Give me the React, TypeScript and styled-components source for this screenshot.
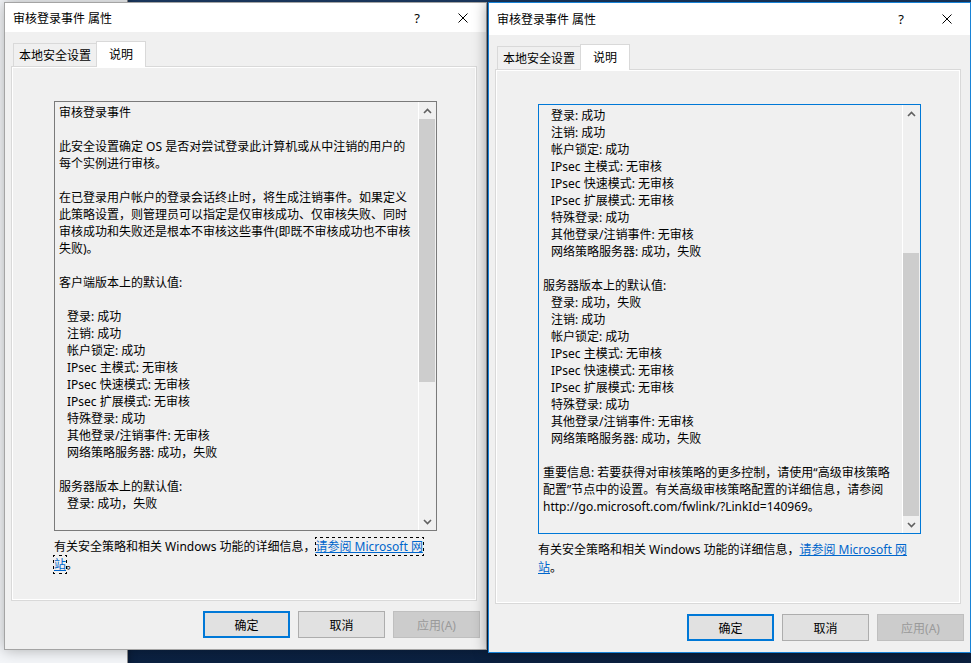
import React, { useLayoutEffect, useRef } from "react";
import styled, { createGlobalStyle, css } from "styled-components";

const GlobalStyle = createGlobalStyle`
  html, body { margin: 0; padding: 0; }
  body {
    font-family: "Noto Sans", "Noto Sans CJK SC", sans-serif;
    font-size: 12px;
    color: #000;
  }
`;

const LINE = 17;
const VISIBLE = 24;

const RAW = [
  "审核登录事件",
  "",
  "此安全设置确定 OS 是否对尝试登录此计算机或从中注销的用户的",
  "每个实例进行审核。",
  "",
  "在已登录用户帐户的登录会话终止时，将生成注销事件。如果定义",
  "此策略设置，则管理员可以指定是仅审核成功、仅审核失败、同时",
  "审核成功和失败还是根本不审核这些事件(即既不审核成功也不审核",
  "失败)。",
  "",
  "客户端版本上的默认值:",
  "",
  "  登录: 成功",
  "  注销: 成功",
  "  帐户锁定: 成功",
  "  IPsec 主模式: 无审核",
  "  IPsec 快速模式: 无审核",
  "  IPsec 扩展模式: 无审核",
  "  特殊登录: 成功",
  "  其他登录/注销事件: 无审核",
  "  网络策略服务器: 成功，失败",
  "",
  "服务器版本上的默认值:",
  "  登录: 成功，失败",
  "  注销: 成功",
  "  帐户锁定: 成功",
  "  IPsec 主模式: 无审核",
  "  IPsec 快速模式: 无审核",
  "  IPsec 扩展模式: 无审核",
  "  特殊登录: 成功",
  "  其他登录/注销事件: 无审核",
  "  网络策略服务器: 成功，失败",
  "",
  "重要信息: 若要获得对审核策略的更多控制，请使用“高级审核策略",
  "配置”节点中的设置。有关高级审核策略配置的详细信息，请参阅",
  "http://go.microsoft.com/fwlink/?LinkId=140969。",
];

const LINES = RAW.map((t) => ({
  indent: t.startsWith("  "),
  text: t.trim(),
}));

/* ---------- desktop ---------- */

const Desktop = styled.div`
  position: relative;
  width: 971px;
  height: 663px;
  overflow: hidden;
  background: linear-gradient(180deg, #1d3d68 0%, #102a4e 70%, #0b2141 100%);
`;

const BackWindow = styled.div`
  position: absolute;
  left: -220px;
  top: -10px;
  width: 347px;
  height: 700px;
  background: #f4f6f9;
  border-right: 1px solid #8e8e8e;
  box-shadow: 0 0 8px rgba(0, 0, 0, 0.35);
`;

/* ---------- window ---------- */

const Win = styled.div<{ $left: number; $top: number; $active?: boolean }>`
  position: absolute;
  left: ${(p) => p.$left}px;
  top: ${(p) => p.$top}px;
  width: 483px;
  box-sizing: border-box;
  background: #f0f0f0;
  border: 1px solid ${(p) => (p.$active ? "#1883d7" : "#a4a4a4")};
  box-shadow: 0 0 14px rgba(0, 0, 0, ${(p) => (p.$active ? 0.45 : 0.3)});
  display: flex;
  flex-direction: column;
`;

const TitleBar = styled.div<{ $h: number }>`
  height: ${(p) => p.$h}px;
  background: #fff;
  display: flex;
  align-items: center;
  padding-left: 8px;
`;

const Title = styled.div`
  flex: 1;
  font-size: 12px;
  white-space: nowrap;
`;

const CaptionButton = styled.div`
  width: 46px;
  height: 100%;
  display: flex;
  align-items: center;
  justify-content: center;
  font-size: 13px;
  color: #000;
`;

const TabArea = styled.div`
  margin: 9px 9px 0 6px;
`;

const TabStrip = styled.div`
  height: 25px;
  display: flex;
  align-items: flex-end;
  padding-left: 2px;
  position: relative;
  z-index: 1;
`;

const Tab = styled.div<{ $selected?: boolean }>`
  box-sizing: border-box;
  border: 1px solid #d9d9d9;
  border-bottom: none;
  font-size: 12px;
  white-space: nowrap;
  display: flex;
  align-items: center;
  ${(p) =>
    p.$selected
      ? css`
          height: 26px;
          margin-bottom: -1px;
          margin-left: -1px;
          padding: 0 12px 2px;
          background: #fff;
        `
      : css`
          height: 23px;
          padding: 0 5px;
          background: #f0f0f0;
        `}
`;

const Panel = styled.div`
  height: 535px;
  box-sizing: border-box;
  border: 1px solid #d9d9d9;
  box-shadow: inset 0 0 0 1px #fff;
  background: #f0f0f0;
  padding: 34px 39px 0 42px;
  display: flex;
  flex-direction: column;
`;

const TextBox = styled.div<{ $focused?: boolean }>`
  height: 430px;
  box-sizing: border-box;
  border: 1px solid ${(p) => (p.$focused ? "#0078d7" : "#7a7a7a")};
  background: #f0f0f0;
  display: flex;
`;

const TextArea = styled.div`
  flex: 1;
  min-width: 0;
  padding: 2px 0 0 4px;
`;

const Viewport = styled.div`
  height: ${VISIBLE * LINE}px;
  overflow: hidden;
`;

const TextLine = styled.div<{ $indent?: boolean }>`
  height: ${LINE}px;
  line-height: ${LINE}px;
  white-space: pre;
  padding-left: ${(p) => (p.$indent ? 8 : 0)}px;
`;

const ScrollBar = styled.div`
  width: 18px;
  box-sizing: border-box;
  border-left: 1px solid #fff;
  display: flex;
  flex-direction: column;
`;

const ArrowButton = styled.div`
  height: 17px;
  display: flex;
  align-items: center;
  justify-content: center;
`;

const Track = styled.div`
  flex: 1;
  display: flex;
  flex-direction: column;
  padding-right: 1px;
`;

const TrackPart = styled.div<{ $grow: number; $thumb?: boolean }>`
  flex: ${(p) => p.$grow} 1 0;
  background: ${(p) => (p.$thumb ? "#cdcdcd" : "transparent")};
`;

const Info = styled.div`
  margin-top: 7px;
  line-height: 18px;
  font-size: 12px;
  white-space: nowrap;
`;

const Link = styled.span<{ $focus?: boolean }>`
  color: #0066cc;
  text-decoration: underline;
  -webkit-box-decoration-break: clone;
  box-decoration-break: clone;
  ${(p) =>
    p.$focus &&
    css`
      outline: 1px dotted #000;
    `}
`;

const ButtonRow = styled.div`
  display: flex;
  justify-content: flex-end;
  gap: 8px;
  padding: 10px 6px 11px 0;
`;

const Button = styled.div<{ $default?: boolean; $disabled?: boolean }>`
  width: 87px;
  height: 27px;
  box-sizing: border-box;
  display: flex;
  align-items: center;
  justify-content: center;
  font-size: 12px;
  background: #e1e1e1;
  border: 1px solid #adadad;
  ${(p) =>
    p.$default &&
    css`
      border: 2px solid #0078d7;
    `}
  ${(p) =>
    p.$disabled &&
    css`
      background: #cccccc;
      border-color: #bfbfbf;
      color: #9a9a9a;
    `}
`;

/* ---------- icons ---------- */

const CloseIcon = () => (
  <svg width="10" height="10" viewBox="0 0 10 10">
    <path d="M0.5 0.5 L9.5 9.5 M9.5 0.5 L0.5 9.5" stroke="#000" strokeWidth="1" />
  </svg>
);

const Chevron = ({ up }: { up?: boolean }) => (
  <svg width="9" height="6" viewBox="0 0 9 6">
    <polyline
      points={up ? "1,5 4.5,1.5 8,5" : "1,1 4.5,4.5 8,1"}
      fill="none"
      stroke="#606060"
      strokeWidth="1.6"
    />
  </svg>
);

/* ---------- dialog ---------- */

type DialogProps = {
  left: number;
  top: number;
  titleHeight: number;
  active?: boolean;
  scrollLines: number;
  linkFocus?: boolean;
};

const Dialog: React.FC<DialogProps> = ({ left, top, titleHeight, active, scrollLines, linkFocus }) => {
  const viewRef = useRef<HTMLDivElement>(null);
  useLayoutEffect(() => {
    if (viewRef.current) viewRef.current.scrollTop = scrollLines * LINE;
  }, [scrollLines]);
  const maxScroll = LINES.length - VISIBLE;

  return (
    <Win $left={left} $top={top} $active={active}>
      <TitleBar $h={titleHeight}>
        <Title>审核登录事件 属性</Title>
        <CaptionButton>?</CaptionButton>
        <CaptionButton>
          <CloseIcon />
        </CaptionButton>
      </TitleBar>
      <TabArea>
        <TabStrip>
          <Tab>本地安全设置</Tab>
          <Tab $selected>说明</Tab>
        </TabStrip>
        <Panel>
          <TextBox $focused={active}>
            <TextArea>
              <Viewport ref={viewRef}>
                {LINES.map((l, i) => (
                  <TextLine key={i} $indent={l.indent}>
                    {l.text || "\u00a0"}
                  </TextLine>
                ))}
              </Viewport>
            </TextArea>
            <ScrollBar>
              <ArrowButton>
                <Chevron up />
              </ArrowButton>
              <Track>
                <TrackPart $grow={scrollLines} />
                <TrackPart $grow={VISIBLE} $thumb />
                <TrackPart $grow={maxScroll - scrollLines} />
              </Track>
              <ArrowButton>
                <Chevron />
              </ArrowButton>
            </ScrollBar>
          </TextBox>
          <Info>
            有关安全策略和相关 Windows 功能的详细信息，
            <Link $focus={linkFocus}>
              请参阅 Microsoft 网<br />站
            </Link>
            。
          </Info>
        </Panel>
      </TabArea>
      <ButtonRow>
        <Button $default>确定</Button>
        <Button>取消</Button>
        <Button $disabled>应用(A)</Button>
      </ButtonRow>
    </Win>
  );
};

export default function App() {
  return (
    <>
      <GlobalStyle />
      <Desktop>
        <BackWindow />
        <Dialog left={4} top={2} titleHeight={29} scrollLines={0} linkFocus />
        <Dialog left={488} top={2} titleHeight={32} scrollLines={12} active />
      </Desktop>
    </>
  );
}
